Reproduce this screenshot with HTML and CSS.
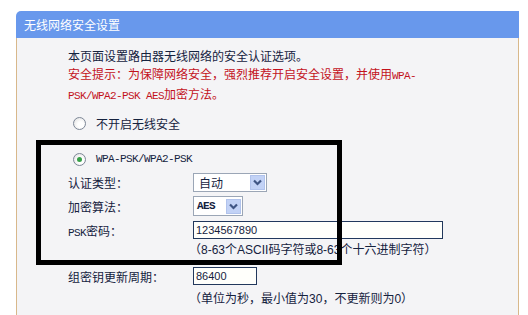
FILE: index.html
```html
<!DOCTYPE html>
<html lang="zh-CN">
<head>
<meta charset="utf-8">
<title>无线网络安全设置</title>
<link rel="stylesheet" href="styles.css">
</head>
<body>
<div class="panel">
  <div class="hd">无线网络安全设置</div>
  <div class="bd">
    <p class="intro">本页面设置路由器无线网络的安全认证选项。</p>
    <p class="warn">安全提示：为保障网络安全，强烈推荐开启安全设置，并使用<span class="mono">WPA-</span><br><span class="mono">PSK/WPA2-PSK AES</span>加密方法。</p>
    <div class="opt opt-off"><span class="radio"></span><span>不开启无线安全</span></div>
    <div class="opt opt-on"><span class="radio checked"></span><span class="mono">WPA-PSK/WPA2-PSK</span></div>
    <div class="form">
      <span class="lbl">认证类型：</span>
      <div class="sel sel-auth"><span>自动</span><i class="btn"><svg width="13" height="13" viewBox="0 0 13 13"><path d="M3 4.5 L6.5 8 L10 4.5" fill="none" stroke="#3f5584" stroke-width="2.2"/></svg></i></div>
      <span class="lbl">加密算法：</span>
      <div class="sel sel-enc"><span class="mono bold">AES</span><i class="btn"><svg width="13" height="13" viewBox="0 0 13 13"><path d="M3 4.5 L6.5 8 L10 4.5" fill="none" stroke="#3f5584" stroke-width="2.2"/></svg></i></div>
      <span class="lbl"><span class="mono">PSK</span>密码：</span>
      <div class="inp inp-psk">1234567890</div>
      <span></span>
      <div class="hint">（<span class="lat">8-63</span>个<span class="lat">ASCII</span>码字符或<span class="lat">8-63</span>个十六进制字符）</div>
      <span class="lbl">组密钥更新周期：</span>
      <div class="inp inp-grp">86400</div>
      <span></span>
      <div class="hint hint2">（单位为秒，最小值为<span class="lat">30</span>，不更新则为<span class="lat">0</span>）</div>
    </div>
  </div>
  <div class="mark"></div>
</div>
</body>
</html>
```
FILE: styles.css
```css
html, body {
  margin: 0;
  background: #fff;
}
body {
  font: 12px "Noto Sans CJK SC", sans-serif;
  color: #15223e;
  height: 315px;
  overflow: hidden;
}
.panel {
  margin: 11px 0 0 16px;
  width: 503px;
  position: relative;
}
.hd {
  height: 27px;
  line-height: 27px;
  background: #6898ec;
  color: #fff;
  border-top-left-radius: 5px;
  padding-left: 8px;
}
.bd {
  background: #f4f4f6;
  border-left: 1px solid #d8b88b;
  border-right: 1px solid #d8b88b;
  padding: 9px 0 0 51px;
  height: 268px;
}
.intro, .warn {
  margin: 0;
  line-height: 18px;
}
.warn {
  color: #c3121c;
}
.mono {
  font-family: "Liberation Mono", monospace;
  font-size: 11px;
  letter-spacing: -0.6px;
}
.bold {
  font-weight: bold;
}
.lat {
  font-family: "Liberation Sans", sans-serif;
  font-size: 12px;
}
.opt {
  display: flex;
  align-items: center;
  height: 20px;
  padding-left: 5px;
  gap: 10px;
}
.opt-off {
  margin-top: 8px;
}
.opt-on {
  margin-top: 16px;
}
.radio {
  width: 13px;
  height: 13px;
  box-sizing: border-box;
  border-radius: 50%;
  border: 1px solid #7d8797;
  background: radial-gradient(circle at 60% 60%, #fff 30%, #dcdcdc 100%);
  display: flex;
  align-items: center;
  justify-content: center;
}
.radio.checked::after {
  content: "";
  width: 5px;
  height: 5px;
  border-radius: 50%;
  background: #37a048;
}
.form {
  margin-top: 1px;
  display: grid;
  grid-template-columns: 125px auto;
  grid-template-rows: 24px 24px 24px 22px 24px 20px;
  align-items: center;
  justify-items: start;
}
.lbl {
  white-space: nowrap;
}
.sel {
  height: 19px;
  box-sizing: border-box;
  border: 1px solid #9ba6b6;
  background: #fff;
  display: flex;
  align-items: center;
  justify-content: space-between;
  padding-left: 5px;
}
.sel-auth {
  width: 74px;
}
.sel-enc {
  width: 50px;
  height: 20px;
  padding-left: 3px;
}
.btn {
  width: 15px;
  height: 15px;
  box-sizing: border-box;
  margin-right: 1px;
  background: #c2d2f6;
  border: 1px solid #b1c3ec;
  display: flex;
  align-items: center;
  justify-content: center;
}
.inp {
  height: 18px;
  box-sizing: border-box;
  border: 1px solid #22385c;
  background: #fffffb;
  padding-left: 2px;
  font: 11px/16px "Liberation Sans", sans-serif;
}
.inp-psk {
  width: 250px;
}
.inp-grp {
  width: 64px;
}
.hint {
  align-self: start;
  line-height: 14px;
  white-space: nowrap;
  margin-left: -4px;
}
.hint2 {
  align-self: center;
  line-height: 20px;
}
.mark {
  position: absolute;
  left: 20px;
  top: 129px;
  width: 306px;
  height: 125px;
  box-sizing: border-box;
  border: 5px solid #000;
}
```
